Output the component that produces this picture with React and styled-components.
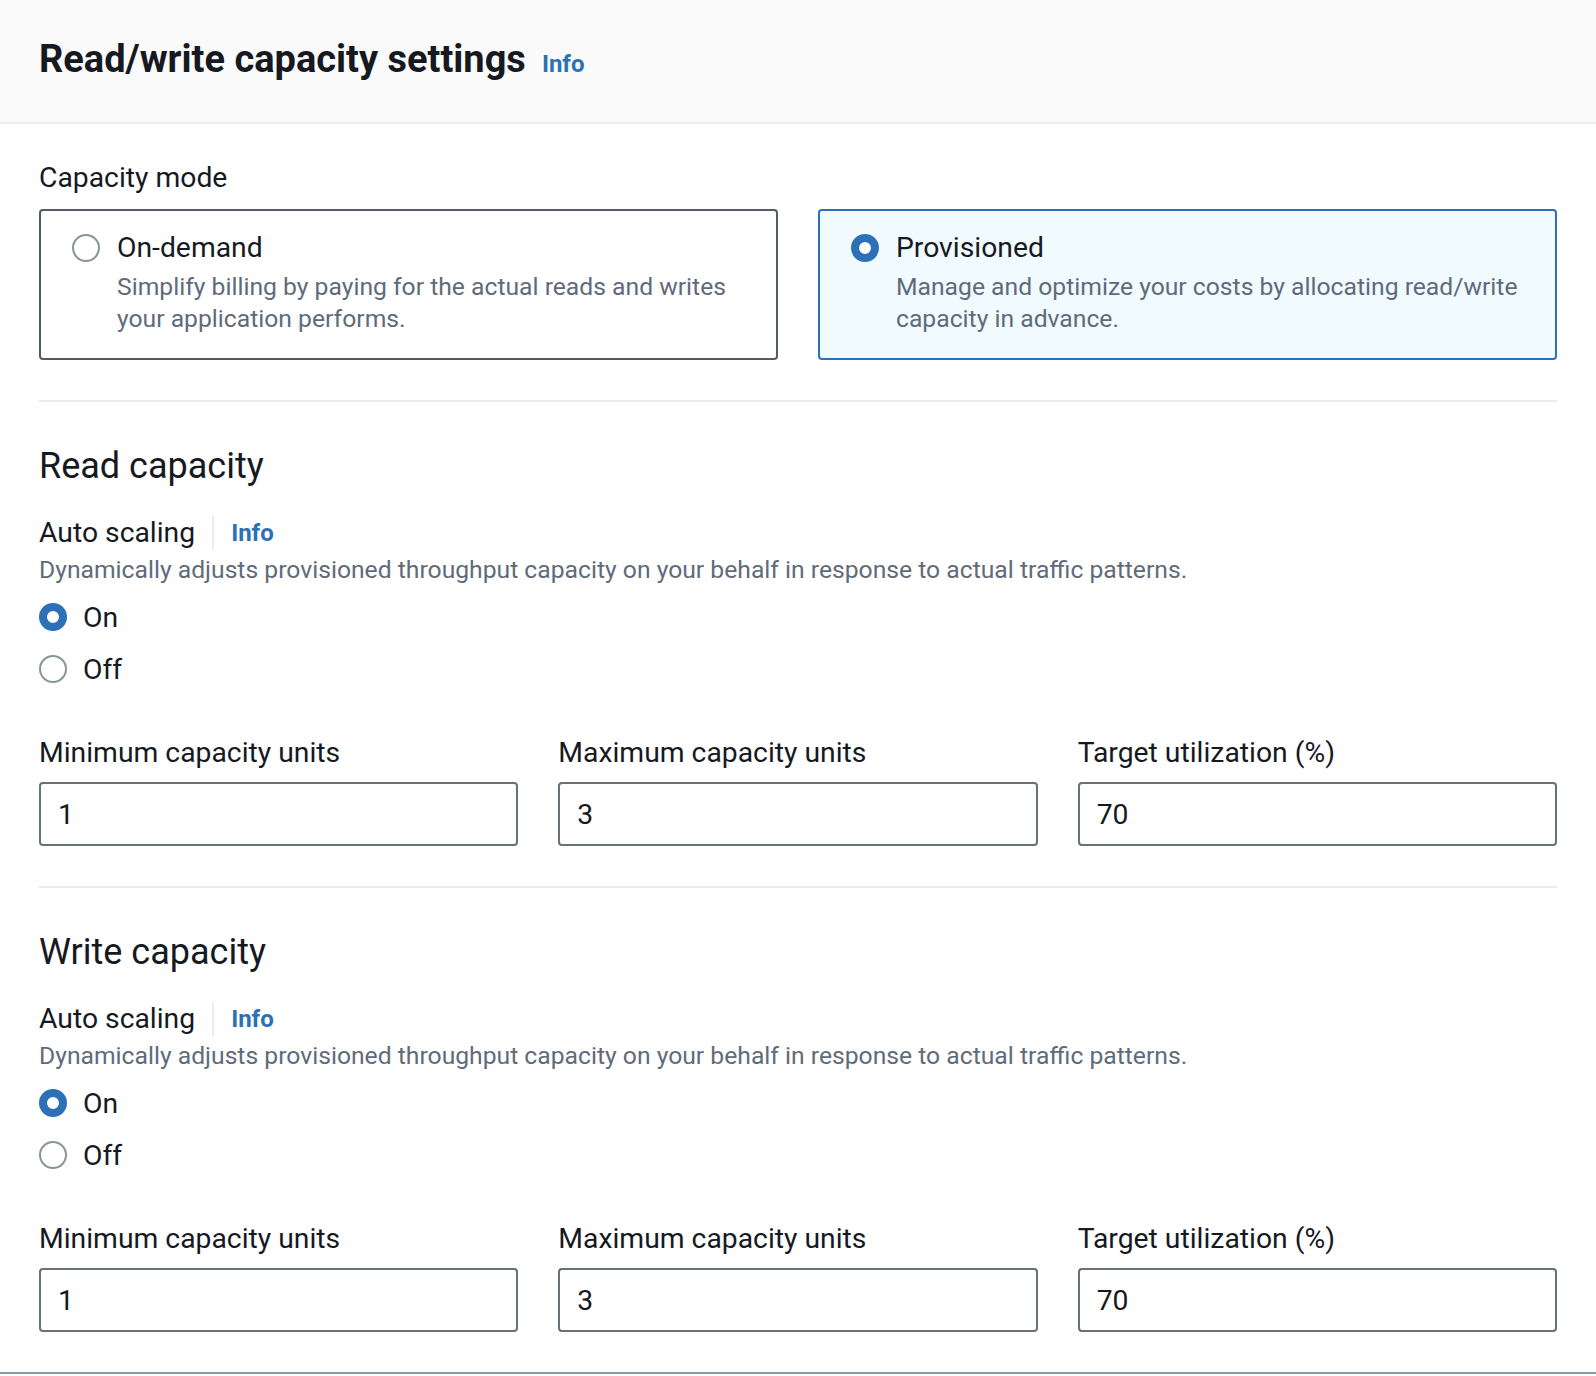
import React, { useState } from "react";
import styled, { createGlobalStyle } from "styled-components";

const GlobalStyle = createGlobalStyle`
  body {
    margin: 0;
    background: #ffffff;
    font-family: Roboto, "Noto Sans", Arial, sans-serif;
    color: #16191f;
  }
  * { box-sizing: border-box; }
`;

const blue = "#2c71b8";

const Container = styled.div`
  background: #fff;
  border-bottom: 2px solid #8d99a0;
  box-shadow: 0 2px 3px rgba(0, 0, 0, 0.12);
`;

const Header = styled.div`
  height: 124px;
  padding: 36px 39px 0;
  background: #fafafa;
  border-bottom: 2px solid #eaeded;
  display: flex;
  align-items: baseline;
  gap: 16px;
`;

const Title = styled.h2`
  margin: 0;
  font-size: 38px;
  line-height: 46px;
  font-weight: 700;
`;

const InfoLink = styled.a`
  color: ${blue};
  font-size: 24px;
  font-weight: 700;
  text-decoration: none;
  cursor: pointer;
`;

const Body = styled.div`
  padding: 34px 39px 40px;
`;

const FieldLabel = styled.div`
  font-size: 28.3px;
  line-height: 40px;
`;

const CardGrid = styled.div`
  display: grid;
  grid-template-columns: 1fr 1fr;
  gap: 40px;
  margin-top: 11px;
`;

const Card = styled.label`
  display: flex;
  gap: 17px;
  padding: 17px 30px 23px 31px;
  border: 2px solid ${(p) => (p.$selected ? blue : "#545b64")};
  background: ${(p) => (p.$selected ? "#f1faff" : "#fff")};
  border-radius: 4px;
  cursor: pointer;
`;

const Radio = styled.span`
  flex: none;
  width: 28px;
  height: 28px;
  margin-top: 6px;
  border-radius: 50%;
  background: #fff;
  border: ${(p) => (p.$checked ? `8.5px solid ${blue}` : "2.6px solid #879596")};
`;

const CardText = styled.div`
  display: flex;
  flex-direction: column;
`;

const CardTitle = styled.div`
  font-size: 28.3px;
  line-height: 40px;
`;

const Description = styled.div`
  color: #5f6b7a;
  font-size: 24.7px;
  line-height: 32px;
  margin-top: ${(p) => p.$top || 0}px;
`;

const Divider = styled.hr`
  margin: ${(p) => p.$top}px 0 0;
  border: none;
  height: 2px;
  background: #eaeded;
`;

const SectionTitle = styled.h3`
  margin: 42px 0 0;
  font-size: 36px;
  line-height: 44px;
  font-weight: 400;
`;

const LabelRow = styled.div`
  display: flex;
  align-items: center;
  margin-top: 25px;
  height: 40px;
`;

const LabelSep = styled.span`
  width: 2px;
  height: 34px;
  background: #eaeded;
  margin: 0 17px 0 17px;
`;

const RadioGroup = styled.div`
  display: flex;
  flex-direction: column;
  gap: 12px;
  margin-top: 11px;
`;

const RadioRow = styled.label`
  display: flex;
  align-items: center;
  gap: 16px;
  height: 40px;
  font-size: 28.3px;
  cursor: pointer;

  ${Radio} {
    margin-top: 0;
  }
`;

const InputGrid = styled.div`
  display: grid;
  grid-template-columns: repeat(3, 1fr);
  gap: 40px;
  margin-top: 44px;
`;

const Field = styled.div`
  display: flex;
  flex-direction: column;
  gap: 9px;
`;

const Input = styled.input`
  height: 64px;
  width: 100%;
  padding: 0 17px;
  border: 2px solid #687078;
  border-radius: 4px;
  font-family: inherit;
  font-size: 28.3px;
  color: #16191f;
  background: #fff;
  outline: none;
`;

function CapacitySection({ title }) {
  const [scaling, setScaling] = useState("on");
  const [values, setValues] = useState({ min: "1", max: "3", target: "70" });
  const fields = [
    { key: "min", label: "Minimum capacity units" },
    { key: "max", label: "Maximum capacity units" },
    { key: "target", label: "Target utilization (%)" },
  ];

  return (
    <div>
      <SectionTitle>{title}</SectionTitle>
      <LabelRow>
        <FieldLabel>Auto scaling</FieldLabel>
        <LabelSep />
        <InfoLink>Info</InfoLink>
      </LabelRow>
      <Description $top={1}>
        Dynamically adjusts provisioned throughput capacity on your behalf in response to actual traffic patterns.
      </Description>
      <RadioGroup>
        <RadioRow onClick={() => setScaling("on")}>
          <Radio $checked={scaling === "on"} />
          On
        </RadioRow>
        <RadioRow onClick={() => setScaling("off")}>
          <Radio $checked={scaling === "off"} />
          Off
        </RadioRow>
      </RadioGroup>
      <InputGrid>
        {fields.map((f) => (
          <Field key={f.key}>
            <FieldLabel>{f.label}</FieldLabel>
            <Input
              value={values[f.key]}
              onChange={(e) => setValues({ ...values, [f.key]: e.target.value })}
            />
          </Field>
        ))}
      </InputGrid>
    </div>
  );
}

export default function App() {
  const [mode, setMode] = useState("provisioned");

  return (
    <Container>
      <GlobalStyle />
      <Header>
        <Title>Read/write capacity settings</Title>
        <InfoLink>Info</InfoLink>
      </Header>
      <Body>
        <FieldLabel>Capacity mode</FieldLabel>
        <CardGrid>
          <Card $selected={mode === "ondemand"} onClick={() => setMode("ondemand")}>
            <Radio $checked={mode === "ondemand"} />
            <CardText>
              <CardTitle>On-demand</CardTitle>
              <Description $top={3}>
                Simplify billing by paying for the actual reads and writes your application performs.
              </Description>
            </CardText>
          </Card>
          <Card $selected={mode === "provisioned"} onClick={() => setMode("provisioned")}>
            <Radio $checked={mode === "provisioned"} />
            <CardText>
              <CardTitle>Provisioned</CardTitle>
              <Description $top={3}>
                Manage and optimize your costs by allocating read/write capacity in advance.
              </Description>
            </CardText>
          </Card>
        </CardGrid>
        <Divider $top={40} />
        <CapacitySection title="Read capacity" />
        <Divider $top={40} />
        <CapacitySection title="Write capacity" />
      </Body>
    </Container>
  );
}
